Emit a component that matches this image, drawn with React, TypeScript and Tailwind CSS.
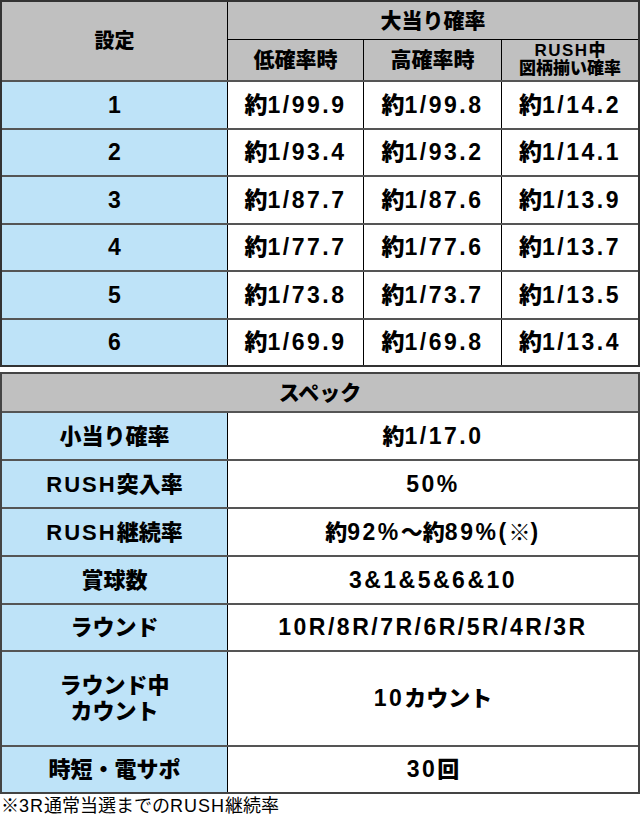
import React from "react";

const BLUE = "bg-[#bee3f8]";
const GRAY = "bg-[#c0c0c0]";

function T({ v, t = "tracking-[2.5px]" }: { v: string; t?: string }) {
  const parts = v.match(/[\x20-\x7e]+|[^\x20-\x7e]+/g) || [];
  return (
    <span>
      {parts.map((p, i) =>
        /^[\x20-\x7e]+$/.test(p) ? (
          <span key={i} className={t}>
            {p}
          </span>
        ) : (
          <span key={i}>{p}</span>
        )
      )}
    </span>
  );
}

const rows1 = [
  ["1", "約1/99.9", "約1/99.8", "約1/14.2"],
  ["2", "約1/93.4", "約1/93.2", "約1/14.1"],
  ["3", "約1/87.7", "約1/87.6", "約1/13.9"],
  ["4", "約1/77.7", "約1/77.6", "約1/13.7"],
  ["5", "約1/73.8", "約1/73.7", "約1/13.5"],
  ["6", "約1/69.9", "約1/69.8", "約1/13.4"],
];

const rows2: [React.ReactNode, string, string][] = [
  ["小当り確率", "約1/17.0", "h-[48px]"],
  [<T v="RUSH突入率" t="tracking-[2px]" />, "50%", "h-[48px]"],
  [<T v="RUSH継続率" t="tracking-[2px]" />, "約92%～約89%(※)", "h-[48px]"],
  ["賞球数", "3&1&5&6&10", "h-[48px]"],
  ["ラウンド", "10R/8R/7R/6R/5R/4R/3R", "h-[47px]"],
  [
    <span className="leading-[26px] text-center block">
      ラウンド中
      <br />
      カウント
    </span>,
    "10カウント",
    "h-[95px]",
  ],
  ["時短・電サポ", "30回", "h-[47px]"],
];

export default function App() {
  return (
    <div
      className="w-[640px] h-[818px] bg-white text-black font-black"
      style={{ fontFamily: '"Liberation Sans", "Noto Sans CJK JP", sans-serif' }}
    >
      {/* Table 1 */}
      <div className="w-[640px] border-2 border-[#333]">
        <div className={`flex h-[78px] ${GRAY}`}>
          <div className="w-[225px] flex items-center justify-center text-[20px]">設定</div>
          <div className="flex-1 flex flex-col border-l border-black">
            <div className="h-[38px] flex items-center justify-center text-[21px] border-b border-black">
              大当り確率
            </div>
            <div className="flex-1 flex">
              <div className="w-[135px] flex items-center justify-center text-[21px]">低確率時</div>
              <div className="w-[138px] flex items-center justify-center text-[21px] border-l border-black">
                高確率時
              </div>
              <div className="flex-1 flex flex-col items-center justify-center text-[17px] leading-[18px] border-l border-black">
                <span>
                  <T v="RUSH中" t="tracking-[1.5px]" />
                </span>
                <span>図柄揃い確率</span>
              </div>
            </div>
          </div>
        </div>
        {rows1.map((r) => (
          <div key={r[0]} className="flex h-[47.5px] border-t-2 border-[#555]">
            <div className={`w-[225px] ${BLUE} flex items-center justify-center text-[23px]`}>
              {r[0]}
            </div>
            <div className="w-[136px] border-l border-black flex items-center justify-center text-[23px]">
              <T v={r[1]} />
            </div>
            <div className="w-[138px] border-l border-black flex items-center justify-center text-[23px]">
              <T v={r[2]} />
            </div>
            <div className="flex-1 border-l border-black flex items-center justify-center text-[23px]">
              <T v={r[3]} />
            </div>
          </div>
        ))}
      </div>

      <div className="h-[5px]" />

      {/* Table 2 */}
      <div className="w-[640px] border-2 border-[#444]">
        <div className={`h-[37px] ${GRAY} flex items-center justify-center text-[21px]`}>スペック</div>
        {rows2.map(([label, val, h], i) => (
          <div key={i} className={`flex ${h} border-t-2 border-[#555]`}>
            <div className={`w-[225px] ${BLUE} flex items-center justify-center text-[22px]`}>
              {label}
            </div>
            <div className="flex-1 border-l border-black flex items-center justify-center text-[22px]">
              <T v={val} t="tracking-[2.5px] text-[23px]" />
            </div>
          </div>
        ))}
      </div>

      <div className="text-[18px] font-normal leading-[24px] pl-[1px]">
        <T v="※3R通常当選までのRUSH継続率" t="tracking-[1px]" />
      </div>
    </div>
  );
}
